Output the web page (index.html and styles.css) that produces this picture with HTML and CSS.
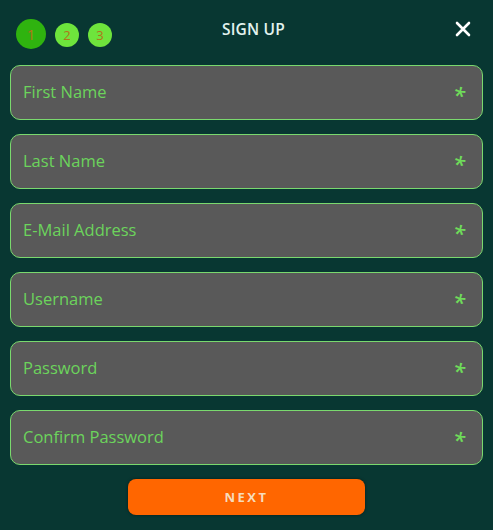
FILE: index.html
```html
<!DOCTYPE html>
<html lang="en">
<head>
<meta charset="utf-8">
<title>Sign Up</title>
<link rel="stylesheet" href="styles.css">
</head>
<body>
<div class="modal">
  <header class="head">
    <div class="steps">
      <span class="step step-active">1</span>
      <span class="step">2</span>
      <span class="step">3</span>
    </div>
    <h1 class="title">SIGN UP</h1>
    <button class="close" aria-label="Close">
      <svg width="16" height="16" viewBox="0 0 16 16"><path d="M2 2L14 14M14 2L2 14" stroke="#ffffff" stroke-width="2.6" stroke-linecap="round"/></svg>
    </button>
  </header>
  <form class="fields">
    <label class="field"><span class="label">First Name</span><span class="req">*</span></label>
    <label class="field"><span class="label">Last Name</span><span class="req">*</span></label>
    <label class="field"><span class="label">E-Mail Address</span><span class="req">*</span></label>
    <label class="field"><span class="label">Username</span><span class="req">*</span></label>
    <label class="field"><span class="label">Password</span><span class="req">*</span></label>
    <label class="field"><span class="label">Confirm Password</span><span class="req">*</span></label>
  </form>
  <div class="actions">
    <button class="next">NEXT</button>
  </div>
</div>
</body>
</html>
```
FILE: styles.css
```css
html, body {
  margin: 0;
  padding: 0;
  background: #083732;
}
body {
  font-family: "Open Sans", "DejaVu Sans", sans-serif;
  width: 493px;
  height: 530px;
  overflow: hidden;
}
.modal {
  padding: 19px 10px 0 10px;
  box-sizing: border-box;
}
.head {
  position: relative;
  height: 30px;
  display: flex;
  align-items: center;
  margin-bottom: 16px;
}
.steps {
  display: flex;
  align-items: center;
  gap: 9px;
  padding-left: 6px;
}
.step {
  width: 24px;
  height: 24px;
  border-radius: 50%;
  background: #6ee43c;
  color: #b0761a;
  font-size: 13px;
  display: flex;
  align-items: center;
  justify-content: center;
  margin-top: 2px;
}
.step-active {
  width: 30px;
  height: 30px;
  background: #2fb30f;
  font-size: 15px;
  margin-top: 0;
}
.title {
  position: absolute;
  left: 14px;
  right: 0;
  top: -1px;
  margin: 0;
  text-align: center;
  font-size: 15.5px;
  font-weight: 600;
  color: #e2f3ee;
  letter-spacing: 0.2px;
  pointer-events: none;
}
.close {
  margin-left: auto;
  margin-right: 12px;
  margin-top: -10px;
  background: none;
  border: 0;
  padding: 0;
  width: 16px;
  height: 16px;
  display: flex;
}
.fields {
  display: flex;
  flex-direction: column;
  gap: 14px;
  margin: 0;
}
.field {
  height: 55px;
  box-sizing: border-box;
  border: 1px solid #7ad96e;
  border-radius: 10px;
  background: #595959;
  display: flex;
  align-items: center;
  padding: 0 17px 0 12px;
}
.label {
  color: #6cd45c;
  font-size: 16.5px;
  flex: 1;
  margin-top: -2px;
}
.req {
  color: #6fdc5a;
  font-size: 22px;
  font-weight: 600;
  font-style: italic;
  line-height: 1;
  margin-top: 2px;
}
.actions {
  display: flex;
  justify-content: center;
  margin-top: 14px;
}
.next {
  width: 237px;
  height: 36px;
  border: 0;
  border-radius: 8px;
  background: #ff6600;
  color: #f6dcbc;
  font-family: "Open Sans", "DejaVu Sans", sans-serif;
  font-size: 13px;
  font-weight: 700;
  letter-spacing: 2.5px;
  box-shadow: 0 0 3px rgba(0,0,0,0.5);
}
```
